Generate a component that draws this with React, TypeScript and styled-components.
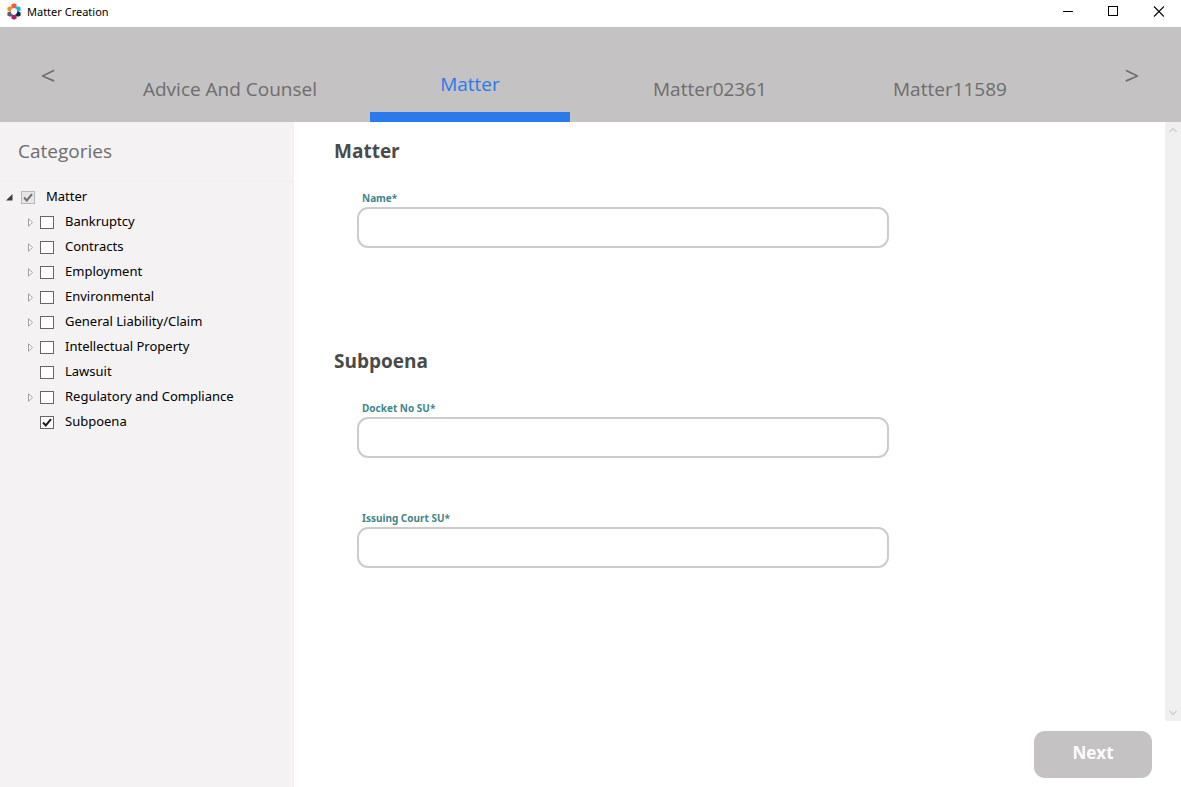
import React, { useState } from "react";
import styled, { createGlobalStyle } from "styled-components";

const GlobalStyle = createGlobalStyle`
  *, *::before, *::after { box-sizing: border-box; }
  body { margin: 0; background: #fff; font-family: "Open Sans", "Noto Sans", sans-serif; }
  button, input { font-family: inherit; }
  ul, h1, h2 { margin: 0; padding: 0; }
`;

const smallFont = `"Noto Sans", "Open Sans", sans-serif`;

const Window = styled.div`
  display: flex;
  flex-direction: column;
  min-height: 100vh;
`;

const TitleBar = styled.header`
  display: flex;
  align-items: center;
  height: 27px;
  padding: 0 0 4px 6px;
  background: #fff;
`;

const Title = styled.h1`
  flex: 1;
  margin-left: 5px;
  font-family: ${smallFont};
  font-size: 11px;
  font-weight: 400;
  line-height: 16px;
  color: #000;
`;

const WindowButton = styled.button`
  display: grid;
  place-items: center;
  width: 45px;
  height: 23px;
  padding: 0;
  border: 0;
  background: none;
`;

const TabBar = styled.nav`
  display: flex;
  height: 95px;
  padding-right: 1px;
  background: #c4c2c3;
`;

const ArrowButton = styled.button`
  flex: none;
  width: 96px;
  padding: 0;
  border: 0;
  background: none;
  font-size: 26px;
  line-height: 32px;
  color: #6d6d6d;
`;

const Tabs = styled.div`
  display: flex;
  flex: 1;
  justify-content: center;
  gap: 40px;
`;

const Tab = styled.button<{ $active: boolean }>`
  width: 200px;
  padding: 28px 0 0;
  border: 0;
  border-bottom: ${(p) => (p.$active ? "10px solid #2a7aeb" : "0")};
  background: none;
  font-size: 19px;
  line-height: 28px;
  color: ${(p) => (p.$active ? "#2a7aeb" : "#6d6d6d")};
`;

const Body = styled.div`
  display: flex;
  flex: 1;
`;

const Sidebar = styled.aside`
  flex: none;
  width: 294px;
  background: #f4f2f3;
`;

const SidebarTitle = styled.h2`
  height: 60px;
  padding: 15px 18px;
  border-bottom: 1px solid #efedee;
  font-size: 19px;
  font-weight: 400;
  line-height: 28px;
  color: #6d6d6d;
`;

const Tree = styled.ul`
  padding: 2px 0 0 6px;
  list-style: none;
`;

const Branch = styled.ul`
  padding-left: 19px;
  list-style: none;
`;

const Row = styled.div`
  display: flex;
  align-items: center;
  height: 25px;
`;

const Toggle = styled.button`
  display: grid;
  place-items: center;
  width: 9px;
  height: 14px;
  margin-right: 6px;
  padding: 2px 0 0;
  border: 0;
  background: none;
`;

const ToggleSpace = styled.span`
  width: 15px;
`;

const CheckLabel = styled.label`
  display: flex;
  align-items: center;
  gap: 11px;
  height: 23px;
  padding-bottom: 2px;
  font-family: ${smallFont};
  font-size: 13px;
  line-height: 20px;
  color: #000;
`;

const CheckFrame = styled.span`
  display: grid;
  margin-top: 4px;
  > * { grid-area: 1 / 1; }
`;

const CheckInput = styled.input`
  appearance: none;
  width: 14px;
  height: 13px;
  margin: 0;
  border: 1px solid #666;
  background: #fff;
  &:disabled { border-color: #b8b8b8; background: #e6e6e6; }
`;

const CheckMark = styled.svg<{ $dim?: boolean }>`
  width: 14px;
  height: 13px;
  fill: none;
  stroke: ${(p) => (p.$dim ? "#6f6f6f" : "#1d1d1d")};
  stroke-width: 2;
  pointer-events: none;
`;

const Main = styled.main`
  display: flex;
  flex: 1;
  flex-direction: column;
  min-width: 0;
`;

const Content = styled.div`
  display: flex;
  flex: 1;
`;

const Form = styled.form`
  flex: 1;
  padding: 0 40px;
`;

const Section = styled.section`
  padding-bottom: 32px;
`;

const SectionTitle = styled.h2`
  height: 68px;
  padding-top: 15px;
  font-size: 19px;
  font-weight: 700;
  line-height: 28px;
  color: #4a4a4a;
`;

const Field = styled.div`
  height: 110px;
  padding-left: 23px;
`;

const FieldLabel = styled.label`
  display: block;
  padding-left: 5px;
  margin-bottom: 1px;
  font-family: ${smallFont};
  font-size: 10px;
  font-weight: 700;
  line-height: 16px;
  color: #43858c;
`;

const TextInput = styled.input`
  display: block;
  width: 100%;
  max-width: 532px;
  height: 41px;
  padding: 0 12px;
  border: 2px solid #ccc;
  border-radius: 11px;
  background: #fff;
  font-size: 14px;
`;

const ScrollTrack = styled.div`
  display: flex;
  flex: none;
  flex-direction: column;
  justify-content: space-between;
  width: 16px;
  background: #f0f0f0;
`;

const ScrollButton = styled.button`
  display: grid;
  place-items: center;
  height: 16px;
  padding: 0;
  border: 0;
  background: none;
`;

const Footer = styled.footer`
  display: flex;
  justify-content: flex-end;
  padding: 10px 29px 9px;
`;

const NextButton = styled.button`
  width: 118px;
  height: 47px;
  padding: 0 0 3px;
  border: 0;
  border-radius: 11px;
  background: #c4c2c3;
  font-size: 17px;
  font-weight: 700;
  line-height: 24px;
  color: #fff;
`;

const petals = [
  { x: 8, y: 3, color: "#f15a3a" },
  { x: 12, y: 6, color: "#1fb5d8" },
  { x: 12, y: 11, color: "#0b2550" },
  { x: 8, y: 14, color: "#b01f6b" },
  { x: 4, y: 11, color: "#5f6066" },
  { x: 4, y: 6, color: "#f58a2c" },
];

const Logo = () => (
  <svg width="16" height="17" viewBox="0 0 16 17" aria-hidden="true">
    {petals.map((p) => (
      <path
        key={p.color}
        d={`M${p.x} ${p.y - 2.8}L${p.x + 2.6} ${p.y - 1.4}V${p.y + 1.4}L${p.x} ${p.y + 2.8}L${p.x - 2.6} ${p.y + 1.4}V${p.y - 1.4}Z`}
        fill={p.color}
      />
    ))}
    <path d="M8 5L11 6.8V10.2L8 12L5 10.2V6.8Z" fill="#fff" />
  </svg>
);

const Check = ({ dim }: { dim?: boolean }) => (
  <CheckMark $dim={dim} viewBox="0 0 14 13" aria-hidden="true">
    <path d="M3 6.5 L5.8 9.5 L11 3.2" />
  </CheckMark>
);

interface Category {
  name: string;
  expandable: boolean;
}

const categories: Category[] = [
  { name: "Bankruptcy", expandable: true },
  { name: "Contracts", expandable: true },
  { name: "Employment", expandable: true },
  { name: "Environmental", expandable: true },
  { name: "General Liability/Claim", expandable: true },
  { name: "Intellectual Property", expandable: true },
  { name: "Lawsuit", expandable: false },
  { name: "Regulatory and Compliance", expandable: true },
  { name: "Subpoena", expandable: false },
];

const tabs = ["Advice And Counsel", "Matter", "Matter02361", "Matter11589"];

const sections = [
  { title: "Matter", fields: [{ id: "name", label: "Name*" }] },
  {
    title: "Subpoena",
    fields: [
      { id: "docket", label: "Docket No SU*" },
      { id: "court", label: "Issuing Court SU*" },
    ],
  },
];

export default function App() {
  const [active, setActive] = useState("Matter");
  const [checked, setChecked] = useState<string[]>(["Subpoena"]);
  const toggle = (name: string) =>
    setChecked((list) => (list.includes(name) ? list.filter((n) => n !== name) : [...list, name]));

  return (
    <Window>
      <GlobalStyle />
      <TitleBar>
        <Logo />
        <Title>Matter Creation</Title>
        <WindowButton aria-label="Minimize">
          <svg width="11" height="11" shapeRendering="crispEdges"><path d="M0 5.5H10" stroke="#000" /></svg>
        </WindowButton>
        <WindowButton aria-label="Maximize">
          <svg width="11" height="11" shapeRendering="crispEdges"><path d="M.5 .5H9.5V9.5H.5Z" fill="none" stroke="#000" /></svg>
        </WindowButton>
        <WindowButton aria-label="Close">
          <svg width="11" height="11"><path d="M1 .5L11 10.5M11 .5L1 10.5" stroke="#000" strokeWidth="1.1" /></svg>
        </WindowButton>
      </TitleBar>
      <TabBar>
        <ArrowButton aria-label="Previous">&lt;</ArrowButton>
        <Tabs>
          {tabs.map((t) => (
            <Tab key={t} $active={t === active} onClick={() => setActive(t)}>{t}</Tab>
          ))}
        </Tabs>
        <ArrowButton aria-label="Following">&gt;</ArrowButton>
      </TabBar>
      <Body>
        <Sidebar>
          <SidebarTitle>Categories</SidebarTitle>
          <Tree>
            <li>
              <Row>
                <Toggle aria-label="Collapse Matter">
                  <svg width="9" height="7"><path d="M6.5 0V6.5H0Z" fill="#3c3c3c" /></svg>
                </Toggle>
                <CheckLabel>
                  <CheckFrame>
                    <CheckInput type="checkbox" checked disabled readOnly />
                    <Check dim />
                  </CheckFrame>
                  Matter
                </CheckLabel>
              </Row>
              <Branch>
                {categories.map((c) => (
                  <li key={c.name}>
                    <Row>
                      {c.expandable ? (
                        <Toggle aria-label={`Expand ${c.name}`}>
                          <svg width="9" height="9"><path d="M3.5 .8L7.5 4.5L3.5 8.2Z" fill="#fff" stroke="#a0a0a0" /></svg>
                        </Toggle>
                      ) : (
                        <ToggleSpace />
                      )}
                      <CheckLabel>
                        <CheckFrame>
                          <CheckInput type="checkbox" checked={checked.includes(c.name)} onChange={() => toggle(c.name)} />
                          {checked.includes(c.name) && <Check />}
                        </CheckFrame>
                        {c.name}
                      </CheckLabel>
                    </Row>
                  </li>
                ))}
              </Branch>
            </li>
          </Tree>
        </Sidebar>
        <Main>
          <Content>
            <Form id="matter-form" onSubmit={(e) => e.preventDefault()}>
              {sections.map((s) => (
                <Section key={s.title}>
                  <SectionTitle>{s.title}</SectionTitle>
                  {s.fields.map((f) => (
                    <Field key={f.id}>
                      <FieldLabel htmlFor={f.id}>{f.label}</FieldLabel>
                      <TextInput id={f.id} type="text" />
                    </Field>
                  ))}
                </Section>
              ))}
            </Form>
            <ScrollTrack>
              <ScrollButton aria-label="Scroll up">
                <svg width="8" height="6"><path d="M.5 5L4 1.5L7.5 5" fill="none" stroke="#d0d0d0" strokeWidth="1.4" /></svg>
              </ScrollButton>
              <ScrollButton aria-label="Scroll down">
                <svg width="8" height="6"><path d="M.5 1L4 4.5L7.5 1" fill="none" stroke="#d0d0d0" strokeWidth="1.4" /></svg>
              </ScrollButton>
            </ScrollTrack>
          </Content>
          <Footer>
            <NextButton form="matter-form" type="submit">Next</NextButton>
          </Footer>
        </Main>
      </Body>
    </Window>
  );
}
